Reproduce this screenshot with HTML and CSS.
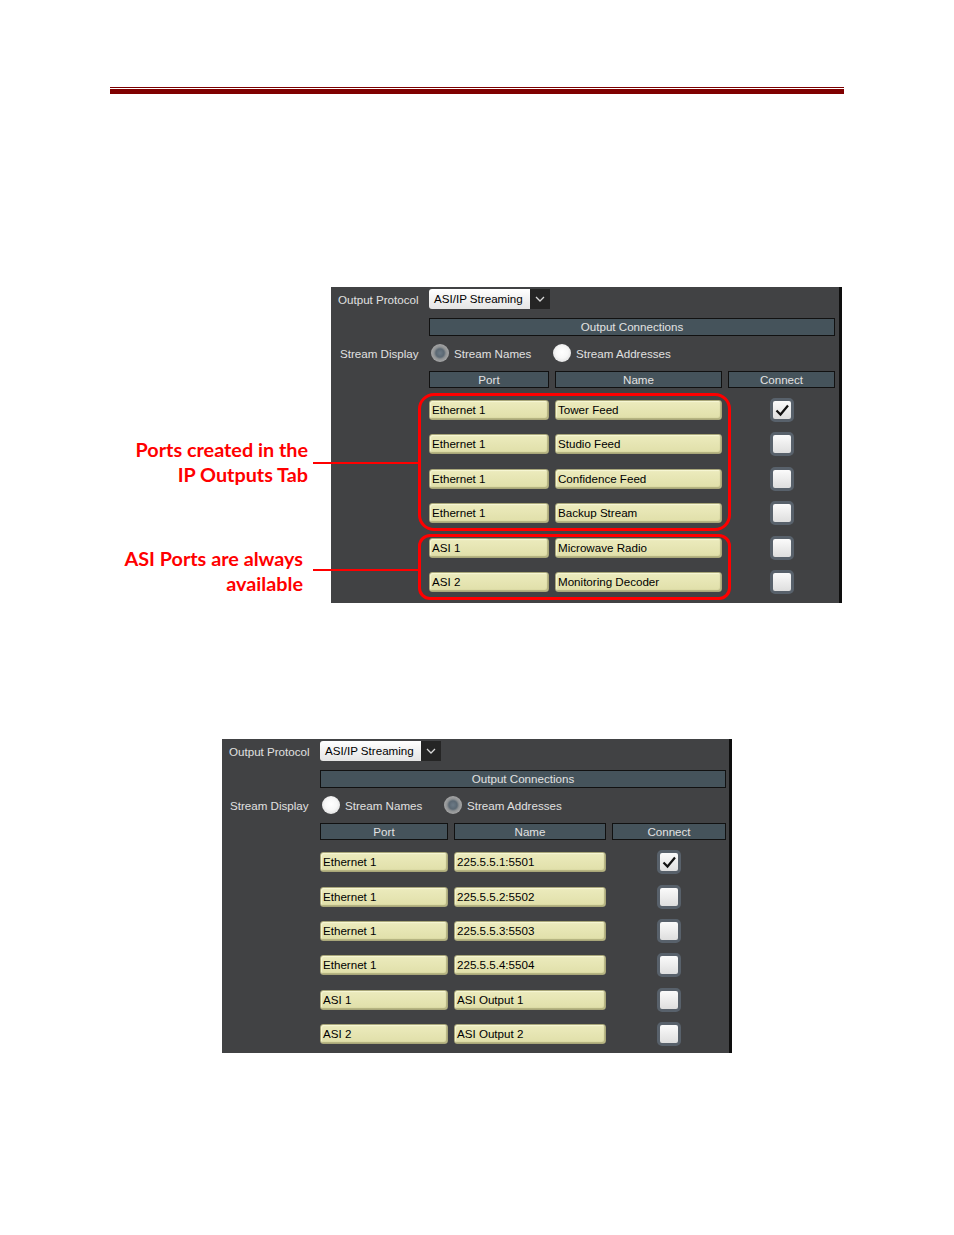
FILE: index.html
```html
<!DOCTYPE html>
<html>
<head>
<meta charset="utf-8">
<title>Output Connections</title>
<link rel="stylesheet" href="styles.css">
</head>
<body>
<div class="page">
  <div class="rule"><div class="rule-thin"></div><div class="rule-thick"></div></div>

  <section class="fig fig1">
    <div class="callouts">
      <p class="callout c1">Ports created in the<br>IP Outputs Tab</p>
      <p class="callout c2">ASI Ports are always<br>available</p>
    </div>
    <div class="panel p1">
      <div class="prow r-proto">
        <span class="lab">Output Protocol</span>
        <div class="select"><span class="sel-text">ASI/IP Streaming</span><span class="sel-btn"><svg width="10" height="6" viewBox="0 0 10 6"><path d="M1 1 L5 5 L9 1" fill="none" stroke="#d8d8d8" stroke-width="1.3"/></svg></span></div>
      </div>
      <div class="prow r-title"><div class="bar span">Output Connections</div></div>
      <div class="prow r-display">
        <span class="lab lab2">Stream Display</span>
        <div class="radios">
          <span class="opt"><span class="radio on"></span>Stream Names</span>
          <span class="opt"><span class="radio"></span>Stream Addresses</span>
        </div>
      </div>
      <div class="prow r-head"><span></span><div class="bar">Port</div><div class="bar">Name</div><div class="bar">Connect</div></div>
      <div class="prow r-data"><span></span><div class="field">Ethernet 1</div><div class="field">Tower Feed</div><div class="cbcell"><span class="cb"><svg width="18" height="18" viewBox="0 0 18 18"><path d="M3.5 9.5 L7.5 13.5 L15 4.5" fill="none" stroke="#111" stroke-width="2.2"/></svg></span></div></div>
      <div class="prow r-data"><span></span><div class="field">Ethernet 1</div><div class="field">Studio Feed</div><div class="cbcell"><span class="cb"></span></div></div>
      <div class="prow r-data"><span></span><div class="field">Ethernet 1</div><div class="field">Confidence Feed</div><div class="cbcell"><span class="cb"></span></div></div>
      <div class="prow r-data"><span></span><div class="field">Ethernet 1</div><div class="field">Backup Stream</div><div class="cbcell"><span class="cb"></span></div></div>
      <div class="prow r-data"><span></span><div class="field">ASI 1</div><div class="field">Microwave Radio</div><div class="cbcell"><span class="cb"></span></div></div>
      <div class="prow r-data"><span></span><div class="field">ASI 2</div><div class="field">Monitoring Decoder</div><div class="cbcell"><span class="cb"></span></div></div>
      <div class="redbox rb1"></div>
      <div class="redbox rb2"></div>
    </div>
    <div class="leader l1"></div>
    <div class="leader l2"></div>
  </section>

  <section class="fig fig2">
    <div class="panel p2">
      <div class="prow r-proto">
        <span class="lab">Output Protocol</span>
        <div class="select"><span class="sel-text">ASI/IP Streaming</span><span class="sel-btn"><svg width="10" height="6" viewBox="0 0 10 6"><path d="M1 1 L5 5 L9 1" fill="none" stroke="#d8d8d8" stroke-width="1.3"/></svg></span></div>
      </div>
      <div class="prow r-title"><div class="bar span">Output Connections</div></div>
      <div class="prow r-display">
        <span class="lab lab2">Stream Display</span>
        <div class="radios">
          <span class="opt"><span class="radio"></span>Stream Names</span>
          <span class="opt"><span class="radio on"></span>Stream Addresses</span>
        </div>
      </div>
      <div class="prow r-head"><span></span><div class="bar">Port</div><div class="bar">Name</div><div class="bar">Connect</div></div>
      <div class="prow r-data"><span></span><div class="field">Ethernet 1</div><div class="field">225.5.5.1:5501</div><div class="cbcell"><span class="cb"><svg width="18" height="18" viewBox="0 0 18 18"><path d="M3.5 9.5 L7.5 13.5 L15 4.5" fill="none" stroke="#111" stroke-width="2.2"/></svg></span></div></div>
      <div class="prow r-data"><span></span><div class="field">Ethernet 1</div><div class="field">225.5.5.2:5502</div><div class="cbcell"><span class="cb"></span></div></div>
      <div class="prow r-data"><span></span><div class="field">Ethernet 1</div><div class="field">225.5.5.3:5503</div><div class="cbcell"><span class="cb"></span></div></div>
      <div class="prow r-data"><span></span><div class="field">Ethernet 1</div><div class="field">225.5.5.4:5504</div><div class="cbcell"><span class="cb"></span></div></div>
      <div class="prow r-data"><span></span><div class="field">ASI 1</div><div class="field">ASI Output 1</div><div class="cbcell"><span class="cb"></span></div></div>
      <div class="prow r-data"><span></span><div class="field">ASI 2</div><div class="field">ASI Output 2</div><div class="cbcell"><span class="cb"></span></div></div>
    </div>
  </section>
</div>
</body>
</html>
```

FILE: styles.css
```css
html, body {
  margin: 0;
  padding: 0;
  background: #ffffff;
}
.page {
  width: 954px;
  height: 1235px;
  background: #ffffff;
  overflow: hidden;
  position: relative;
}
.rule {
  margin: 87px 0 0 110px;
  width: 734px;
}
.rule-thin {
  height: 1px;
  background: #7c0000;
}
.rule-thick {
  height: 5px;
  margin-top: 1px;
  background: #800000;
}
.fig {
  position: relative;
  display: flex;
}
.fig1 {
  margin-top: 193px;
}
.fig2 {
  margin-top: 136px;
  padding-left: 222px;
}
.callouts {
  width: 331px;
  flex: none;
  display: flex;
  flex-direction: column;
  align-items: flex-end;
}
.callout {
  margin: 0;
  font-family: Lato, "Liberation Sans", sans-serif;
  font-weight: 700;
  font-size: 19.8px;
  line-height: 25px;
  color: #ff0000;
  text-align: right;
  white-space: nowrap;
}
.c1 {
  margin-top: 150px;
  padding-right: 23px;
}
.c2 {
  margin-top: 59px;
  padding-right: 28px;
}
.leader {
  position: absolute;
  left: 313px;
  width: 106px;
  height: 2px;
  background: #ff0000;
}
.l1 { top: 175px; }
.l2 { top: 282px; }

.panel {
  position: relative;
  flex: none;
  box-sizing: border-box;
  background: #414244;
  border-right: 3px solid #0e0e0e;
  padding: 2px 4px 4px 0;
  font-family: "Liberation Sans", Arial, sans-serif;
  font-size: 11.6px;
  color: #e0e0e0;
}
.p1 {
  width: 511px;
  --c2: 120px;
  --c3: 167px;
  --c4: 107px;
}
.p2 {
  width: 510px;
  padding-right: 3px;
  padding-bottom: 2px;
  --c2: 128px;
  --c3: 152px;
  --c4: 114px;
}
.prow {
  display: grid;
  grid-template-columns: 92px var(--c2) var(--c3) var(--c4);
  column-gap: 6px;
  align-items: center;
}
.lab {
  padding-left: 7px;
  white-space: nowrap;
}
.lab2 {
  padding-left: 9px;
}
.p2 .lab2 {
  padding-left: 8px;
}
.r-proto {
  height: 20px;
}
.select {
  grid-column: 2 / -1;
  justify-self: start;
  display: flex;
  height: 20px;
}
.sel-text {
  width: 101px;
  box-sizing: border-box;
  padding-left: 5px;
  line-height: 20px;
  color: #000;
  background: linear-gradient(#ffffff, #e4e4e4);
  border-radius: 3px 0 0 3px;
  white-space: nowrap;
}
.sel-btn {
  width: 20px;
  background: #252525;
  display: flex;
  align-items: center;
  justify-content: center;
}
.r-title {
  margin-top: 9px;
}
.bar {
  height: 17px;
  box-sizing: border-box;
  border: 1px solid #111;
  background: #45535b;
  text-align: center;
  line-height: 15px;
  color: #e2e2e2;
}
.bar.span {
  grid-column: 2 / -1;
  height: 18px;
  line-height: 16px;
}
.r-display {
  margin-top: 7px;
  height: 20px;
}
.radios {
  grid-column: 2 / -1;
  display: flex;
  align-items: center;
  padding-left: 2px;
}
.opt {
  display: flex;
  align-items: center;
  gap: 5px;
  white-space: nowrap;
}
.opt:first-child {
  width: 122px;
  flex: none;
}
.radio {
  width: 18px;
  height: 18px;
  border-radius: 50%;
  flex: none;
  background: radial-gradient(circle at 50% 45%, #ffffff 0, #f7f7f7 45%, #d2d2d2 100%);
}
.radio.on {
  background: radial-gradient(circle at 50% 50%, #6c7a86 0, #5b6873 32%, #8f9294 48%, #a9a9a9 75%, #8a8a8a 100%);
}
.r-head {
  margin-top: 8px;
}
.r-head + .r-data {
  margin-top: 4.8px;
}
.r-data {
  height: 34.4px;
}
.field {
  height: 20px;
  box-sizing: border-box;
  border: 1px solid #a9a77a;
  border-radius: 3px;
  background: linear-gradient(#ecebbd, #e0dfa9);
  box-shadow: inset -1px -1px 1px rgba(120, 118, 70, 0.45), inset 1px 1px 1px rgba(255, 255, 230, 0.6);
  color: #000;
  line-height: 18px;
  padding-left: 2px;
  white-space: nowrap;
  overflow: hidden;
}
.cbcell {
  display: flex;
  justify-content: center;
}
.cb {
  width: 24px;
  height: 24px;
  box-sizing: border-box;
  border: 3px solid #58616b;
  border-radius: 5px;
  background: linear-gradient(#fbfbfb, #dedede);
  display: flex;
  align-items: center;
  justify-content: center;
}
.redbox {
  position: absolute;
  left: 87px;
  width: 313px;
  box-sizing: border-box;
  border: 3px solid #ff0000;
}
.rb1 {
  top: 106px;
  height: 138px;
  border-radius: 16px;
}
.rb2 {
  top: 247px;
  height: 66px;
  border-radius: 12px;
}
```
